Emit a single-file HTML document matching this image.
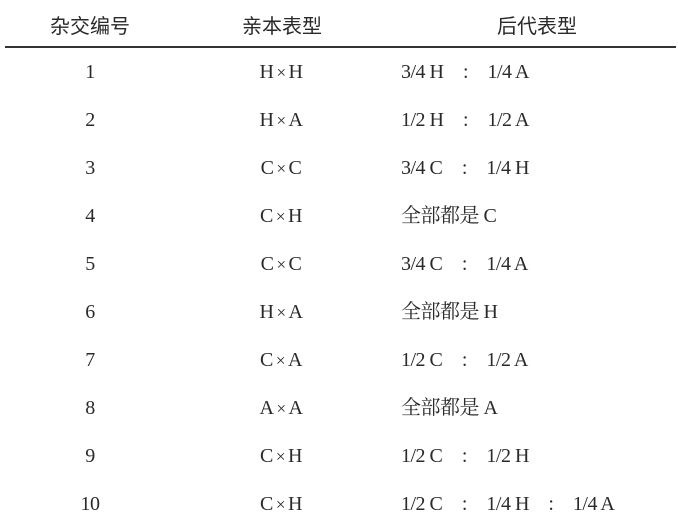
<!DOCTYPE html><html><head><meta charset="utf-8"><style>
body{margin:0;width:678px;height:519px;background:#fff;position:relative;overflow:hidden;color:#2a2a2a}
.h{position:absolute;top:12px;font:20px "Noto Sans CJK SC",sans-serif;line-height:26px;transform:translateX(-50%)}
.r{position:absolute;font:20px "Liberation Serif","Noto Serif CJK SC",serif;line-height:24px;white-space:pre;letter-spacing:-0.5px}
.c{transform:translateX(-50%)}
.x{font-size:17px;padding:0 3px}
.k{display:inline-block;width:44px;text-align:center}
.line{position:absolute;left:5px;width:671px;top:46px;height:2px;background:#333}
</style></head><body>
<div class="h" style="left:90px">杂交编号</div>
<div class="h" style="left:282px">亲本表型</div>
<div class="h" style="left:537px">后代表型</div>
<div class="line"></div>
<div id="rows"></div>
<script>
var d=[["1","H × H","3/4 H : 1/4 A"],["2","H × A","1/2 H : 1/2 A"],["3","C × C","3/4 C : 1/4 H"],["4","C × H","全部都是 C"],["5","C × C","3/4 C : 1/4 A"],["6","H × A","全部都是 H"],["7","C × A","1/2 C : 1/2 A"],["8","A × A","全部都是 A"],["9","C × H","1/2 C : 1/2 H"],["10","C × H","1/2 C : 1/4 H : 1/4 A"]];
var h="";d.forEach(function(r,i){var t=60+i*48;
h+='<div class="r c" style="left:90px;top:'+t+'px">'+r[0]+'</div><div class="r c" style="left:281px;top:'+t+'px">'+r[1].replace(/ × /,'<span class="x">×</span>')+'</div><div class="r" style="left:401px;top:'+t+'px">'+r[2].replace(/ : /g,'<span class="k">:</span>')+'</div>';});
document.getElementById("rows").innerHTML=h;
</script>
</body></html>
